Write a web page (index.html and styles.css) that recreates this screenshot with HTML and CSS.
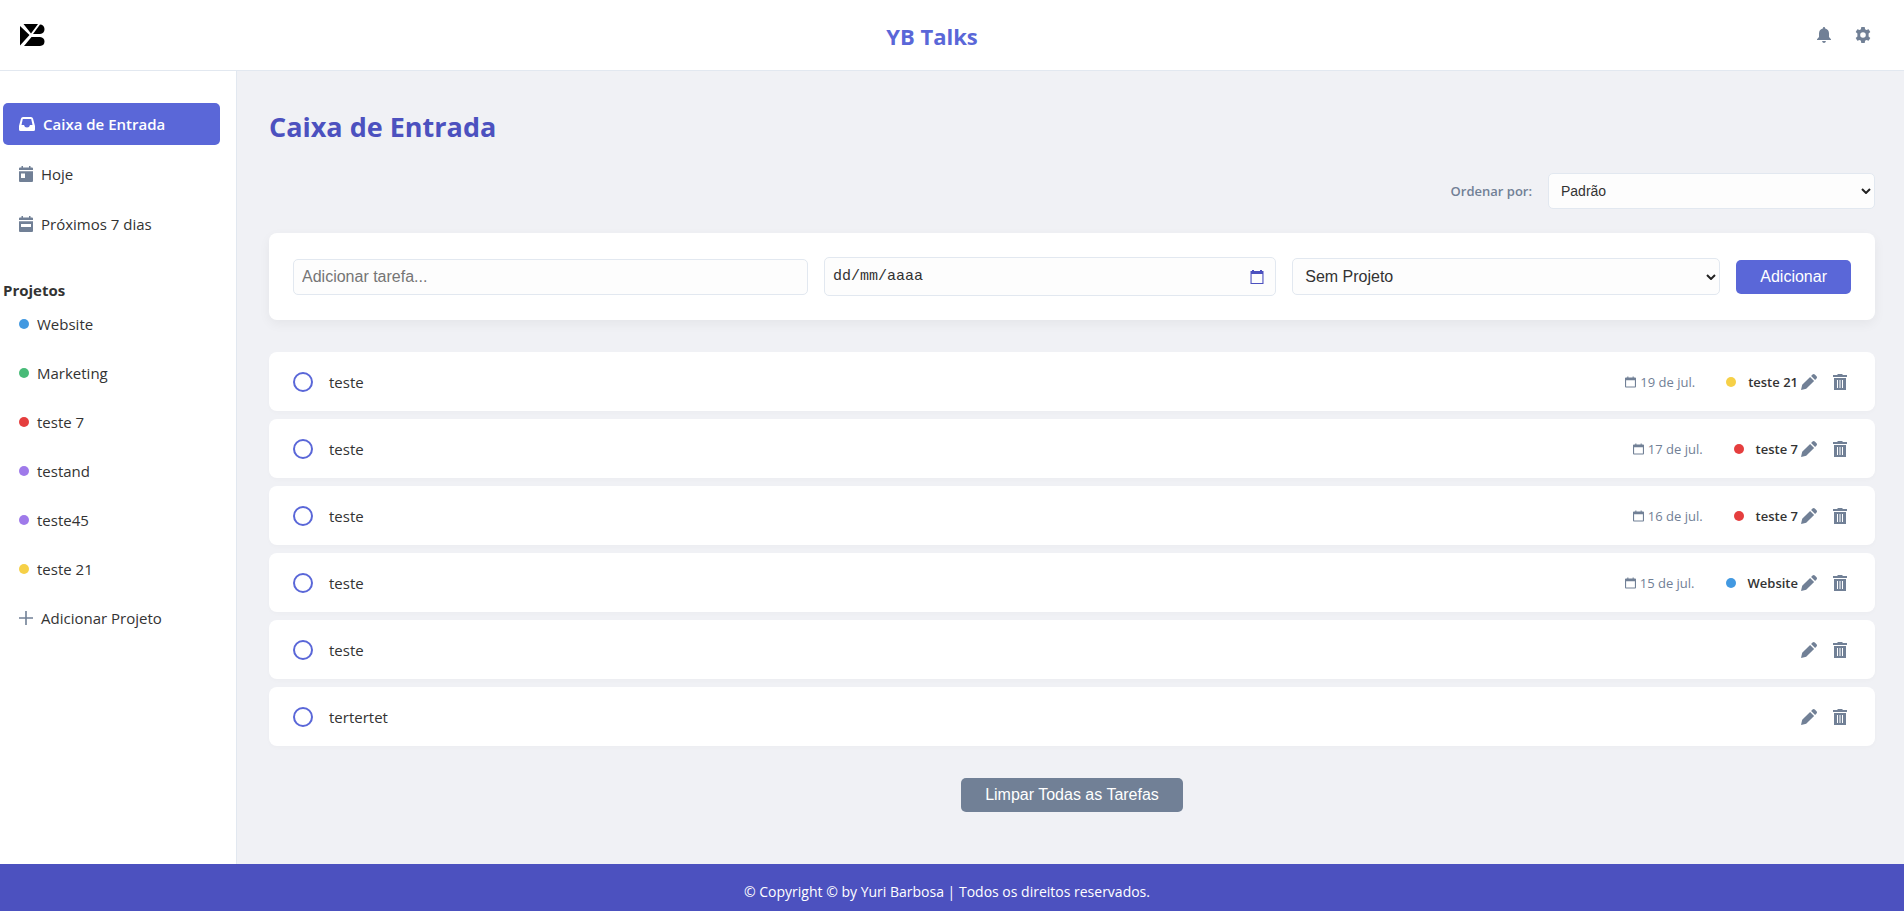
FILE: index.html
```
<!DOCTYPE html>
<html lang="pt-BR">
<head>
<meta charset="utf-8">
<title>YB Talks</title>
<link rel="stylesheet" href="styles.css">
</head>
<body>
<svg class="sprite" aria-hidden="true">
  <symbol id="i-calendar" viewBox="0 0 12 12"><path d="M2.500 0h1.200v1h4.600V0h1.200v1H11q1 0 1 1v9q0 1-1 1H1q-1 0-1-1V2q0-1 1-1h1.500zM1.200 4v6.800h9.600V4z" fill-rule="evenodd"/></symbol>
  <symbol id="i-pencil" viewBox="0 0 16 16"><path d="M0 16l1.200-5.200 7.900-7.900 4 4-7.900 7.900zM10.100 1.900l1.400-1.400q1.200-1 2.300 0l1.700 1.700q1 1.200 0 2.300l-1.400 1.400z"/></symbol>
  <symbol id="i-trash" viewBox="0 0 14 16"><path d="M4.500 0h5v1H14v2H0V1h4.500zM1 4h12v12H1zM4 6v8h1V6zM6.500 6v8h1V6zM9 6v8h1V6z" fill-rule="evenodd"/></symbol>
</svg>

<header class="topbar">
  <a class="logo" href="#" aria-label="YB Talks">
    <svg viewBox="0 0 25 23" width="25" height="23"><path d="M3.500 0H18l-7 9.500zM20 .5q4 0 4.500 4.500 0 4.500-4.500 5H13zM0 2l9.500 9L0 21.500zM11.500 13H20q4.500.5 4.500 4.500T20 22H4z"/></svg>
  </a>
  <h1 class="brand">YB Talks</h1>
  <div class="topbar-actions">
    <button class="icon-btn" type="button" aria-label="Notificações"><svg viewBox="0 0 14 16" width="14" height="16"><path d="M7 0q1.200 0 1.200 1.400Q12 2.300 12 6.500V10l2 2.200v.8H0v-.8L2 10V6.500Q2 2.300 5.800 1.400 5.800 0 7 0zM5 14h4q-.5 2-2 2t-2-2z"/></svg></button>
    <button class="icon-btn" type="button" aria-label="Configurações"><svg viewBox="0 0 16 16" width="16" height="16"><path fill-rule="evenodd" d="M6.300 0h3.400l.4 2.200 1.300.8 2.200-.8 1.700 2.900-1.700 1.500v2.800l1.700 1.500-1.700 2.900-2.200-.8-1.300.8-.4 2.200H6.300l-.4-2.200-1.300-.8-2.200.8L.7 10.900l1.700-1.500V6.600L.7 5.100l1.700-2.900 2.200.8 1.300-.8zM8 5.200a2.800 2.800 0 1 0 0 5.600 2.800 2.800 0 0 0 0-5.600z"/></svg></button>
  </div>
</header>

<div class="layout">
  <nav class="sidebar">
    <ul class="menu">
      <li><a class="item item-active" href="#"><svg viewBox="0 0 16 14" width="16" height="14"><path fill-rule="evenodd" d="M4 0h8q1.600 0 2 1.500L16 9v3.500q0 1.500-1.500 1.500h-13Q0 14 0 12.500V9l2-7.500Q2.400 0 4 0zM3.800 2L2.500 8H5q.5 2.500 3 2.500T11 8h2.500l-1.300-6z"/></svg>Caixa de Entrada</a></li>
      <li><a class="item" href="#"><svg viewBox="0 0 14 16" width="14" height="16"><path fill-rule="evenodd" d="M2.500 0H4v1.500h6V0h1.500v1.500H13q1 0 1 1V4H0V2.500q0-1 1-1h1.500zM0 5.200h14V15q0 1-1 1H1q-1 0-1-1zM2 7.500V12h4V7.500z"/></svg>Hoje</a></li>
      <li><a class="item" href="#"><svg viewBox="0 0 14 16" width="14" height="16"><path fill-rule="evenodd" d="M2.500 0H4v1.500h6V0h1.500v1.500H13q1 0 1 1V4H0V2.500q0-1 1-1h1.500zM0 5.200h14V15q0 1-1 1H1q-1 0-1-1zM2 8v3h10V8z"/></svg>Próximos 7 dias</a></li>
    </ul>
    <h2 class="menu-title">Projetos</h2>
    <ul class="menu menu-projects">
      <li><a class="item" href="#"><span class="dot blue"></span>Website</a></li>
      <li><a class="item" href="#"><span class="dot green"></span>Marketing</a></li>
      <li><a class="item" href="#"><span class="dot red"></span>teste 7</a></li>
      <li><a class="item" href="#"><span class="dot purple"></span>testand</a></li>
      <li><a class="item" href="#"><span class="dot purple"></span>teste45</a></li>
      <li><a class="item" href="#"><span class="dot yellow"></span>teste 21</a></li>
      <li><button class="item" type="button"><svg viewBox="0 0 14 14" width="14" height="14"><path d="M6.200 0h1.600v6.200H14v1.600H7.800V14H6.200V7.800H0V6.200h6.200z"/></svg>Adicionar Projeto</button></li>
    </ul>
  </nav>

  <main class="content">
    <h2 class="page-title">Caixa de Entrada</h2>
    <div class="sort">
      <label for="sort">Ordenar por:</label>
      <span class="select-wrap sort-select"><select class="field" id="sort"><option>Padrão</option></select><svg class="chevron" viewBox="0 0 10 6" width="10" height="6"><path d="M1 1l4 4 4-4"/></svg></span>
    </div>

    <form class="card task-form">
      <input class="field field-text" type="text" placeholder="Adicionar tarefa..." aria-label="Adicionar tarefa">
      <span class="date-wrap"><input class="field field-date" type="text" inputmode="numeric" placeholder="dd/mm/aaaa" aria-label="Data"><button class="date-btn" type="button" aria-label="Abrir calendário"><svg viewBox="0 0 14 14" width="14" height="14"><path fill-rule="evenodd" d="M2 0h2v1h6V0h2v1h1.500v13H.5V1H2zM1.600 4v9h10.800V4z"/></svg></button></span>
      <span class="select-wrap"><select class="field" aria-label="Projeto"><option>Sem Projeto</option></select><svg class="chevron" viewBox="0 0 10 6" width="10" height="6"><path d="M1 1l4 4 4-4"/></svg></span>
      <button class="btn btn-primary" type="button">Adicionar</button>
    </form>

    <ul class="tasks">
      <li class="task"><input class="check" type="checkbox" id="t1"><label class="task-name" for="t1">teste</label><span class="due"><svg width="11" height="12"><use href="#i-calendar"/></svg>19 de jul.</span><span class="tag"><span class="dot yellow"></span>teste 21</span><span class="actions"><button class="icon-btn" type="button" aria-label="Editar"><svg width="16" height="16"><use href="#i-pencil"/></svg></button><button class="icon-btn" type="button" aria-label="Excluir"><svg width="14" height="16"><use href="#i-trash"/></svg></button></span></li>
      <li class="task"><input class="check" type="checkbox" id="t2"><label class="task-name" for="t2">teste</label><span class="due"><svg width="11" height="12"><use href="#i-calendar"/></svg>17 de jul.</span><span class="tag"><span class="dot red"></span>teste 7</span><span class="actions"><button class="icon-btn" type="button" aria-label="Editar"><svg width="16" height="16"><use href="#i-pencil"/></svg></button><button class="icon-btn" type="button" aria-label="Excluir"><svg width="14" height="16"><use href="#i-trash"/></svg></button></span></li>
      <li class="task"><input class="check" type="checkbox" id="t3"><label class="task-name" for="t3">teste</label><span class="due"><svg width="11" height="12"><use href="#i-calendar"/></svg>16 de jul.</span><span class="tag"><span class="dot red"></span>teste 7</span><span class="actions"><button class="icon-btn" type="button" aria-label="Editar"><svg width="16" height="16"><use href="#i-pencil"/></svg></button><button class="icon-btn" type="button" aria-label="Excluir"><svg width="14" height="16"><use href="#i-trash"/></svg></button></span></li>
      <li class="task"><input class="check" type="checkbox" id="t4"><label class="task-name" for="t4">teste</label><span class="due"><svg width="11" height="12"><use href="#i-calendar"/></svg>15 de jul.</span><span class="tag"><span class="dot blue"></span>Website</span><span class="actions"><button class="icon-btn" type="button" aria-label="Editar"><svg width="16" height="16"><use href="#i-pencil"/></svg></button><button class="icon-btn" type="button" aria-label="Excluir"><svg width="14" height="16"><use href="#i-trash"/></svg></button></span></li>
      <li class="task"><input class="check" type="checkbox" id="t5"><label class="task-name" for="t5">teste</label><span class="actions"><button class="icon-btn" type="button" aria-label="Editar"><svg width="16" height="16"><use href="#i-pencil"/></svg></button><button class="icon-btn" type="button" aria-label="Excluir"><svg width="14" height="16"><use href="#i-trash"/></svg></button></span></li>
      <li class="task"><input class="check" type="checkbox" id="t6"><label class="task-name" for="t6">tertertet</label><span class="actions"><button class="icon-btn" type="button" aria-label="Editar"><svg width="16" height="16"><use href="#i-pencil"/></svg></button><button class="icon-btn" type="button" aria-label="Excluir"><svg width="14" height="16"><use href="#i-trash"/></svg></button></span></li>
    </ul>
    <div class="clear-row"><button class="btn btn-muted" type="button">Limpar Todas as Tarefas</button></div>
  </main>
</div>

<footer class="footer">© Copyright © by Yuri Barbosa | Todos os direitos reservados.</footer>
</body>
</html>
```
FILE: styles.css
```
:root {
  --primary: #5a67d8;
  --primary-dark: #4c51bf;
  --muted: #718096;
  --line: #e2e8f0;
  --text: #333;
  --ui: "Segoe UI", "Open Sans", sans-serif;
  --form: Arial, "Liberation Sans", sans-serif;
}

* { box-sizing: border-box; }

body {
  margin: 0;
  min-height: 100vh;
  display: flex;
  flex-direction: column;
  background: #f0f1f5;
  color: var(--text);
  font: 15px/26px var(--ui);
}

h1, h2, ul { margin: 0; padding: 0; }
ul { list-style: none; }
svg { display: block; flex: none; fill: currentColor; }
button { font: inherit; color: inherit; border: 0; background: none; padding: 0; cursor: pointer; }
.sprite { position: absolute; width: 0; height: 0; }

.topbar {
  display: grid;
  grid-template-columns: 1fr auto 1fr;
  align-items: center;
  height: 71px;
  padding: 0 33px 0 20px;
  background: #fff;
  border-bottom: 1px solid var(--line);
}
.logo { color: #000; justify-self: start; }
.brand { color: var(--primary); font-size: 22px; line-height: 38px; margin: 2px 27px 0 0; }
.topbar-actions { display: flex; justify-content: flex-end; gap: 24px; }
.icon-btn { color: var(--muted); }

.layout { flex: 1; display: flex; }

.sidebar {
  flex: none;
  width: 237px;
  padding: 32px 16px 16px 3px;
  background: #fff;
  border-right: 1px solid var(--line);
}
.menu { display: flex; flex-direction: column; gap: 8px; }
.menu-projects { gap: 7px; }
.item {
  display: flex;
  align-items: center;
  gap: 8px;
  width: 100%;
  padding: 8px 16px;
  border-radius: 5px;
  color: var(--text);
  text-decoration: none;
  text-align: left;
}
.item svg { color: var(--muted); }
.item-active { background: var(--primary); color: #fff; font-weight: 600; }
.item-active svg { color: #fff; }
.menu-title { margin-top: 32px; font-size: 15px; line-height: 26px; }

.dot { flex: none; width: 10px; height: 10px; border-radius: 50%; }
.blue { background: #4299e1; }
.green { background: #48bb78; }
.red { background: #e53e3e; }
.purple { background: #9f7aea; }
.yellow { background: #f6d047; }

.content { flex: 1; min-width: 0; padding: 32px 29px 32px 32px; }
.page-title { color: var(--primary-dark); font-size: 27px; line-height: 48px; }

.sort {
  display: flex;
  justify-content: flex-end;
  align-items: center;
  gap: 16px;
  margin: 22px 0 24px;
}
.sort label { color: var(--muted); font-size: 13px; font-weight: 600; }

.field {
  width: 100%;
  min-width: 0;
  padding: 8px;
  border: 1px solid var(--line);
  border-radius: 5px;
  background: #fdfdfd;
  color: var(--text);
  font: 16px/18px var(--form);
}
.field::placeholder { color: #757575; }
select.field { appearance: none; padding: 8px 24px 8px 12px; height: 37px; }
.select-wrap, .date-wrap { display: grid; align-items: center; }
.select-wrap > *, .date-wrap > * { grid-area: 1 / 1; }
.chevron { justify-self: end; margin-right: 4px; fill: none; stroke: #222; stroke-width: 2; pointer-events: none; }
.sort-select { width: 327px; }
.sort-select .field { font-size: 14px; height: 36px; }

.card, .task { background: #fff; border-radius: 8px; }
.card { box-shadow: 0 4px 12px rgba(0, 0, 0, .05); }
.task-form {
  display: grid;
  grid-template-columns: 515fr 452fr 428fr auto;
  align-items: center;
  gap: 16px;
  padding: 24px;
}
.field-text { height: 36px; }
.field-date { height: 39px; font: 15px/20px Consolas, "Liberation Mono", monospace; }
.field-date::placeholder { color: var(--text); }
.date-btn { justify-self: end; margin-right: 12px; color: var(--primary-dark); }

.btn {
  flex: none;
  padding: 8px 24px;
  border-radius: 5px;
  color: #fff;
  font: 16px/18px var(--form);
}
.btn-primary { background: var(--primary); }
.btn-muted { background: var(--muted); }

.tasks { display: flex; flex-direction: column; gap: 8px; margin-top: 32px; }
.task {
  display: flex;
  align-items: center;
  height: 59px;
  padding: 0 24px;
  box-shadow: 0 2px 4px rgba(0, 0, 0, .02);
}
.check {
  appearance: none;
  width: 20px;
  height: 20px;
  margin: 0 16px 0 0;
  border: 2px solid var(--primary);
  border-radius: 50%;
}
.check:checked { background: var(--primary); }
.task-name { flex: 1; }
.due { display: flex; align-items: center; gap: 4px; margin-right: 31px; color: var(--muted); font-size: 13px; }
.tag { display: flex; align-items: center; gap: 12px; margin-right: 3px; font-size: 13px; font-weight: 600; }
.actions { display: flex; gap: 16px; margin-right: 4px; }

.clear-row { display: flex; justify-content: center; margin-top: 32px; }

.footer {
  padding: 15px 10px 6px 0;
  background: var(--primary-dark);
  color: #fff;
  font-size: 14px;
  text-align: center;
}
```
